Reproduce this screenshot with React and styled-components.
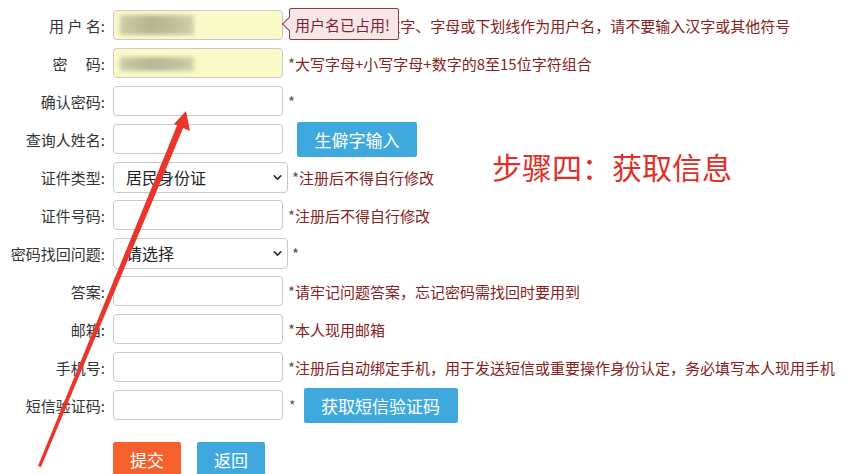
import styled, { createGlobalStyle } from "styled-components";
import { ChevronDown } from "lucide-react";

const GlobalStyle = createGlobalStyle`
  html, body {
    margin: 0;
    padding: 0;
    background: #fff;
  }
  body {
    font-family: "Noto Sans CJK SC", "Noto Sans", sans-serif;
  }
`;

const Page = styled.div`
  position: relative;
  width: 845px;
  height: 474px;
  overflow: hidden;
  padding-top: 10px;
  box-sizing: border-box;
`;

const Form = styled.form`
  display: flex;
  flex-direction: column;
  gap: 8px;
`;

const Row = styled.div`
  display: flex;
  align-items: center;
  height: 30px;
`;

const Label = styled.label`
  width: 105px;
  margin-right: 8px;
  text-align: right;
  font-size: 15px;
  color: #333;
  white-space: pre;
  flex-shrink: 0;
`;

const Field = styled.div`
  position: relative;
  flex-shrink: 0;
`;

const Input = styled.input`
  display: block;
  width: 170px;
  height: 30px;
  box-sizing: border-box;
  border: 1px solid #c9c9c9;
  border-radius: 4px;
  background: ${(p) => (p.$filled ? "#fbfbc9" : "#fff")};
  outline: none;
`;

// blurred (masked) value in the filled-in fields
const Smudge = styled.span`
  position: absolute;
  left: 7px;
  top: ${(p) => p.$top}px;
  width: 74px;
  height: ${(p) => p.$h}px;
  background: linear-gradient(90deg, #c4c4a2 0%, #a9a98a 40%, #b3b394 70%, #c9c9a8 100%);
  filter: blur(2px);
  opacity: 0.85;
`;

const Select = styled.select`
  display: block;
  width: 175px;
  height: 31px;
  box-sizing: border-box;
  border: 1px solid #c9c9c9;
  border-radius: 4px;
  background: #fff;
  appearance: none;
  padding: 0 0 0 12px;
  font-family: inherit;
  font-size: 16px;
  color: #222;
  outline: none;
`;

const Chevron = styled(ChevronDown)`
  position: absolute;
  right: 4px;
  top: 9px;
  pointer-events: none;
`;

const Hint = styled.span`
  margin-left: ${(p) => p.$gap ?? 5}px;
  font-size: 15px;
  color: #842222;
  white-space: nowrap;

  b {
    font-weight: normal;
    color: #555;
  }
`;

const Star = styled.span`
  margin-left: 6px;
  font-size: 14px;
  color: #555;
`;

const BlueButton = styled.button`
  margin-left: ${(p) => p.$gap}px;
  width: ${(p) => p.$w}px;
  height: 35px;
  border: none;
  border-radius: 2px;
  background: #3fa9dd;
  color: #fff;
  font-family: inherit;
  font-size: 17px;
  flex-shrink: 0;
`;

const Actions = styled.div`
  display: flex;
  gap: 16px;
  margin: 22px 0 0 113px;
`;

const ActionButton = styled.button`
  width: 68px;
  height: 34px;
  border: none;
  border-radius: 2px;
  background: ${(p) => (p.$primary ? "#f5612c" : "#3fa9dd")};
  color: #fff;
  font-family: inherit;
  font-size: 17px;
`;

const Tooltip = styled.div`
  position: absolute;
  left: 176px;
  top: -2px;
  width: 110px;
  height: 32px;
  padding-left: 5px;
  display: flex;
  align-items: center;
  box-sizing: border-box;
  background: #f7e6e8;
  border: 1px solid #8a3a48;
  border-radius: 2px;
  color: #7d1f2c;
  font-size: 15px;
  white-space: nowrap;

  &::before {
    content: "";
    position: absolute;
    left: -6px;
    top: 10px;
    width: 9px;
    height: 9px;
    background: #f7e6e8;
    border-left: 1px solid #8a3a48;
    border-bottom: 1px solid #8a3a48;
    transform: rotate(45deg);
  }
`;

const StepTitle = styled.div`
  position: absolute;
  left: 492px;
  top: 144px;
  font-size: 30px;
  color: #df2f28;
  white-space: nowrap;
`;

const Annotation = styled.svg`
  position: absolute;
  left: 0;
  top: 0;
  pointer-events: none;
`;

function TextRow({ label, hint, filled, smudge, children }) {
  return (
    <Row>
      <Label>{label}</Label>
      <Field>
        <Input $filled={filled} />
        {smudge && <Smudge $top={smudge[0]} $h={smudge[1]} />}
        {children}
      </Field>
      {hint !== undefined && (
        <Hint>
          <b>*</b>
          {hint}
        </Hint>
      )}
    </Row>
  );
}

function SelectRow({ label, value, hint }) {
  return (
    <Row>
      <Label>{label}</Label>
      <Field>
        <Select defaultValue={value}>
          <option>{value}</option>
        </Select>
        <Chevron size={13} strokeWidth={3} color="#333" />
      </Field>
      <Hint $gap={4}>
        <b>*</b>
        {hint}
      </Hint>
    </Row>
  );
}

export default function App() {
  return (
    <>
      <GlobalStyle />
      <Page>
        <Form onSubmit={(e) => e.preventDefault()}>
          <TextRow
            label="用 户 名:"
            filled
            smudge={[5, 20]}
            hint="请使用6-20位数字、字母或下划线作为用户名，请不要输入汉字或其他符号"
          >
            <Tooltip>用户名已占用!</Tooltip>
          </TextRow>
          <TextRow
            label={"密\u3000 码:"}
            filled
            smudge={[9, 14]}
            hint="大写字母+小写字母+数字的8至15位字符组合"
          />
          <TextRow label="确认密码:" hint="" />
          <Row>
            <Label>查询人姓名:</Label>
            <Field>
              <Input />
            </Field>
            <BlueButton type="button" $gap={14} $w={120}>
              生僻字输入
            </BlueButton>
          </Row>
          <SelectRow label="证件类型:" value="居民身份证" hint="注册后不得自行修改" />
          <TextRow label="证件号码:" hint="注册后不得自行修改" />
          <SelectRow label="密码找回问题:" value="请选择" hint="" />
          <TextRow label="答案:" hint="请牢记问题答案，忘记密码需找回时要用到" />
          <TextRow label="邮箱:" hint="本人现用邮箱" />
          <TextRow
            label="手机号:"
            hint="注册后自动绑定手机，用于发送短信或重要操作身份认定，务必填写本人现用手机"
          />
          <Row>
            <Label>短信验证码:</Label>
            <Field>
              <Input />
            </Field>
            <Star>*</Star>
            <BlueButton type="button" $gap={8} $w={154}>
              获取短信验证码
            </BlueButton>
          </Row>
        </Form>
        <Actions>
          <ActionButton type="submit" $primary>
            提交
          </ActionButton>
          <ActionButton type="button">返回</ActionButton>
        </Actions>

        <StepTitle>步骤四：获取信息</StepTitle>

        <Annotation width="845" height="474" viewBox="0 0 845 474">
          <polygon points="38,466 41,467 184,126 178,123" fill="#e8362c" />
          <polygon points="186,111 190,131 174,124" fill="#e8362c" />
        </Annotation>
      </Page>
    </>
  );
}
